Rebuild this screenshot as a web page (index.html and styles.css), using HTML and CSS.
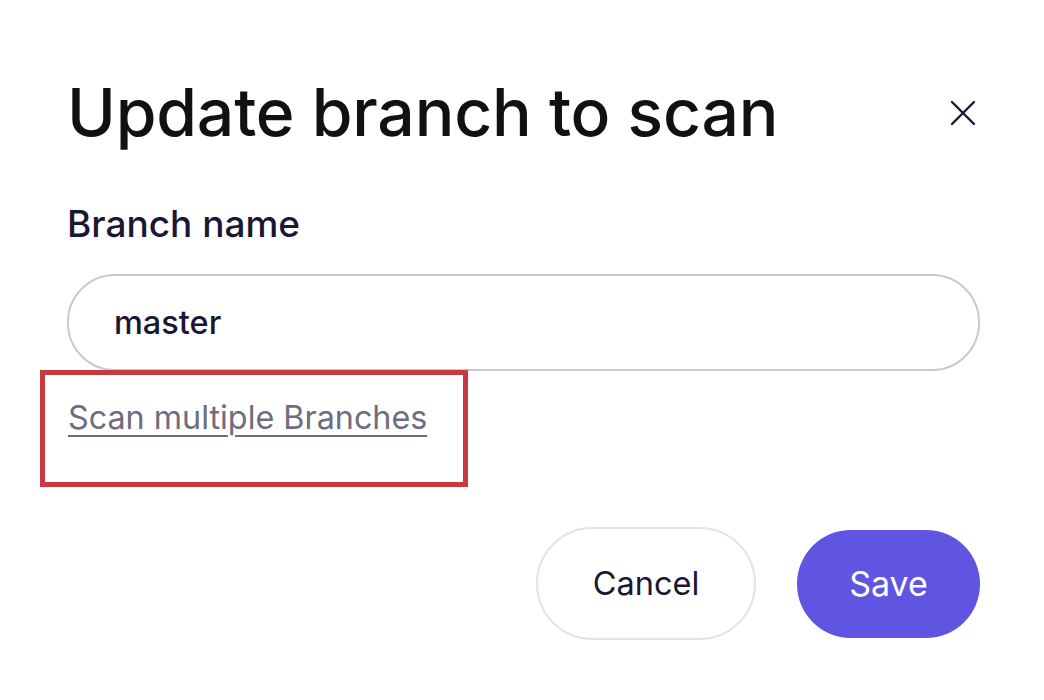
FILE: index.html
```html
<!DOCTYPE html>
<html>
<head>
<meta charset="utf-8">
<link rel="stylesheet" href="styles.css">
</head>
<body>
<div class="modal">
  <div class="header">
    <h1 class="title">Update branch to scan</h1>
    <button class="close" aria-label="Close">
      <svg width="26" height="26" viewBox="0 0 26 26"><path d="M2 2L24 24M24 2L2 24" stroke="#1a1633" stroke-width="2.4" stroke-linecap="round" fill="none"/></svg>
    </button>
  </div>
  <label class="label">Branch name</label>
  <div class="input">master</div>
  <div class="highlight">
    <a class="link" href="#">Scan multiple Branches</a>
  </div>
  <div class="actions">
    <button class="btn btn-cancel">Cancel</button>
    <button class="btn btn-save">Save</button>
  </div>
</div>
</body>
</html>
```
FILE: styles.css
```css
* { box-sizing: border-box; }
html, body { margin: 0; padding: 0; background: #fff; }
body { font-family: Inter, "Noto Sans", sans-serif; color: #1a1633; }
.modal {
  width: 1044px;
  height: 700px;
  padding: 70px 64px 0 67px;
  display: flex;
  flex-direction: column;
}
.header {
  display: flex;
  align-items: center;
  justify-content: space-between;
}
.title {
  margin: 0;
  font-size: 66px;
  font-weight: 500;
  line-height: 84px;
  color: #111114;
  letter-spacing: -0.2px;
}
.close {
  border: none;
  background: none;
  padding: 0;
  margin-right: 4px;
  margin-top: 2px;
  display: flex;
}
.label {
  margin-top: 48px;
  font-size: 37px;
  font-weight: 500;
  line-height: 44px;
  color: #1a1633;
}
.input {
  margin-top: 28px;
  height: 97px;
  border: 2px solid #c9c8cf;
  border-radius: 48px;
  padding: 0 45px;
  display: flex;
  align-items: center;
  font-size: 32.5px;
  font-weight: 500;
  color: #1a1633;
}
.highlight {
  margin-left: -27px;
  margin-top: -1px;
  width: 428px;
  height: 117px;
  border: 5px solid #c83a42;
  padding: 23px 0 0 23px;
}
.link {
  font-size: 32.3px;
  color: #6e6d80;
  text-decoration: underline;
  text-underline-offset: 6px;
  text-decoration-thickness: 2px;
  line-height: 40px;
}
.actions {
  margin-top: 40px;
  display: flex;
  justify-content: flex-end;
  align-items: center;
  gap: 41px;
}
.btn {
  font-family: Inter, "Noto Sans", sans-serif;
  font-size: 32.5px;
  font-weight: 400;
  border-radius: 60px;
  cursor: pointer;
}
.btn-cancel {
  width: 220px;
  height: 113px;
  background: #fff;
  border: 2px solid #e4e3ea;
  color: #1a1633;
}
.btn-save {
  width: 183px;
  height: 108px;
  background: #5f55e0;
  border: none;
  color: #fff;
  font-size: 34px;
}
```
